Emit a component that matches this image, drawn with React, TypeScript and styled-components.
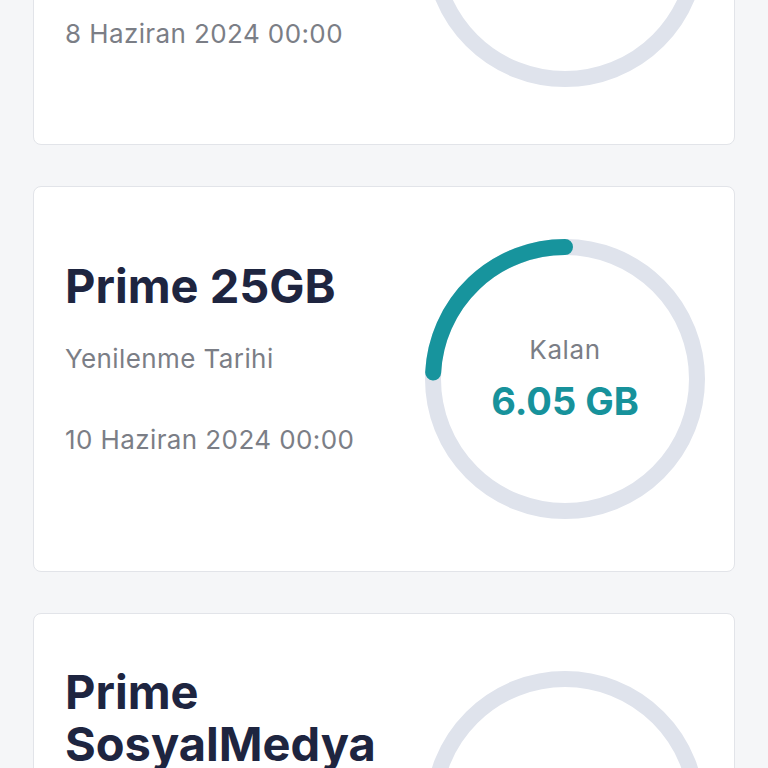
import React from 'react';
import styled, { createGlobalStyle } from 'styled-components';

const GlobalStyle = createGlobalStyle`
  html, body {
    margin: 0;
    padding: 0;
    background: #f5f6f8;
    font-family: Inter, "Noto Sans", sans-serif;
    overflow: hidden;
  }
`;

const List = styled.div`
  display: flex;
  flex-direction: column;
  gap: 41px;
  padding: 0 33px;
  margin-top: -251px;
`;

const Card = styled.div`
  display: flex;
  align-items: center;
  background: #ffffff;
  border: 1px solid #e2e4e9;
  border-radius: 8px;
  padding: 52px 29px 52px 31px;
`;

const Info = styled.div`
  flex: 1;
  display: flex;
  flex-direction: column;
  padding-right: 30px;
  padding-bottom: 43px;
  min-width: 0;
`;

const Title = styled.h2`
  margin: 0;
  font-size: 47px;
  line-height: 52px;
  font-weight: 700;
  color: #1e2540;
`;

const Label = styled.div<{ $gap: number }>`
  margin-top: ${(p) => p.$gap}px;
  font-size: 26px;
  line-height: 30px;
  letter-spacing: 0.4px;
  color: #7b7e86;
`;

const Gauge = styled.div`
  position: relative;
  width: 280px;
  height: 280px;
  flex-shrink: 0;
`;

const GaugeText = styled.div`
  position: absolute;
  inset: 0;
  display: flex;
  flex-direction: column;
  align-items: center;
  justify-content: center;
`;

const Remaining = styled.div`
  font-size: 26px;
  line-height: 30px;
  letter-spacing: 0.6px;
  color: #7b7e86;
`;

const Amount = styled.div`
  margin-top: 14px;
  font-size: 38px;
  line-height: 44px;
  font-weight: 700;
  color: #17929b;
`;

const R = 132;
const C = 2 * Math.PI * R;

interface Pkg {
  title: string;
  date: string;
  total: number;
  left: number;
}

const packages: Pkg[] = [
  { title: 'Prime Sınırsız Video', date: '8 Haziran 2024 00:00', total: 10, left: 0 },
  { title: 'Prime 25GB', date: '10 Haziran 2024 00:00', total: 25, left: 6.05 },
  { title: 'Prime SosyalMedya', date: '12 Haziran 2024 00:00', total: 10, left: 0 },
];

const Ring: React.FC<{ ratio: number; left: number }> = ({ ratio, left }) => (
  <Gauge>
    <svg width="280" height="280" viewBox="0 0 280 280">
      <circle cx="140" cy="140" r={R} fill="none" stroke="#dfe3ec" strokeWidth="16" />
      {ratio > 0 && (
        <circle
          cx="140"
          cy="140"
          r={R}
          fill="none"
          stroke="#17949d"
          strokeWidth="16"
          strokeLinecap="round"
          strokeDasharray={`${C * ratio} ${C}`}
          transform="rotate(-90 140 140) scale(1 -1) translate(0 -280)"
        />
      )}
    </svg>
    <GaugeText>
      <Remaining>Kalan</Remaining>
      <Amount>{left.toFixed(2)} GB</Amount>
    </GaugeText>
  </Gauge>
);

const App: React.FC = () => (
  <>
    <GlobalStyle />
    <List>
      {packages.map((p) => (
        <Card key={p.title}>
          <Info>
            <Title>{p.title}</Title>
            <Label $gap={32}>Yenilenme Tarihi</Label>
            <Label $gap={51}>{p.date}</Label>
          </Info>
          <Ring ratio={p.left / p.total} left={p.left} />
        </Card>
      ))}
    </List>
  </>
);

export default App;
